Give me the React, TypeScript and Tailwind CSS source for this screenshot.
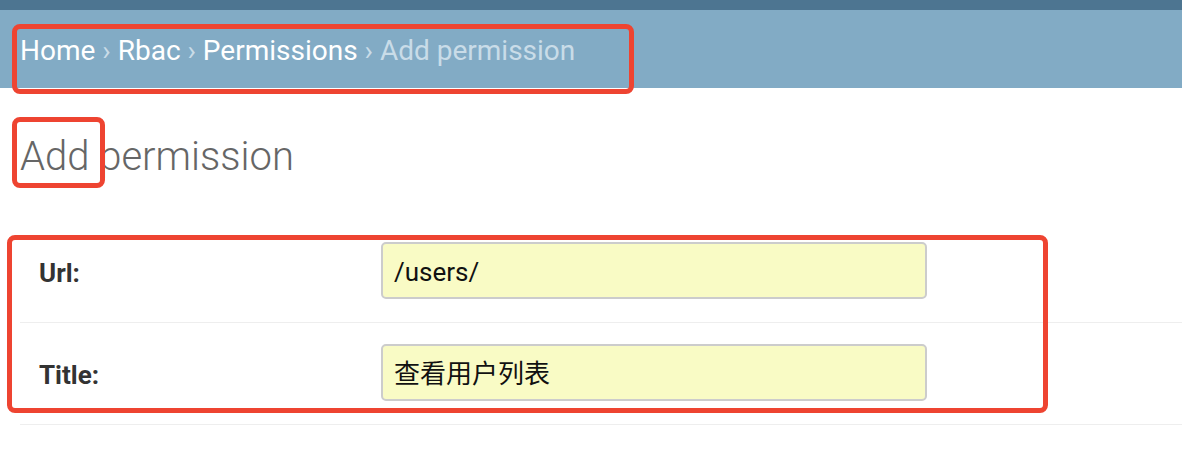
export default function App() {
  return (
    <div className="relative w-[1182px] h-[456px] overflow-hidden bg-white font-['Roboto','Noto_Sans_CJK_SC',sans-serif]">
      {/* Header */}
      <div className="h-[10px] bg-[#4d7591]" />

      {/* Breadcrumbs */}
      <div className="h-[78px] bg-[#82abc5] pl-[20px] pt-[27px] text-[28px] leading-none text-white">
        <span>Home</span>
        <span className="text-[#c9dce8]"> › </span>
        <span>Rbac</span>
        <span className="text-[#c9dce8]"> › </span>
        <span>Permissions</span>
        <span className="text-[#c9dce8]"> › Add permission</span>
      </div>

      {/* Title */}
      <h1 className="mt-[45px] pl-[20px] text-[40px] leading-[48px] font-light text-[#666]">
        Add permission
      </h1>

      {/* Form */}
      <div className="mt-[40px] ml-[20px]">
        <FormRow label="Url:" value="/users/" />
        <FormRow label="Title:" value="查看用户列表" />
      </div>

      {/* Annotations */}
      <div className="absolute left-[12px] top-[24px] w-[622px] h-[70px] rounded-[8px] border-[5px] border-[#ee4431]" />
      <div className="absolute left-[12px] top-[117px] w-[93px] h-[71px] rounded-[8px] border-[5px] border-[#ee4431]" />
      <div className="absolute left-[7px] top-[235px] w-[1041px] h-[178px] rounded-[8px] border-[5px] border-[#ee4431]" />
    </div>
  );
}

function FormRow({ label, value }: { label: string; value: string }) {
  return (
    <div className="flex items-center pt-[21px] pb-[23px] border-b border-[#eee]">
      <label className="w-[361px] pl-[19px] pt-[5px] text-[26px] font-bold text-[#333]">{label}</label>
      <div className="w-[546px] h-[57px] flex items-center px-[11px] pt-[4px] rounded-[5px] border-2 border-[#ccc] bg-[#f9fbc5] text-[26px] text-[#111]">
        {value}
      </div>
    </div>
  );
}
